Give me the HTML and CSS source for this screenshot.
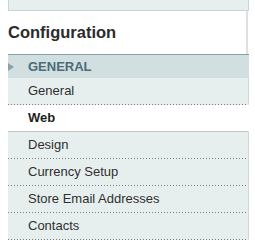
FILE: index.html
```html
<!DOCTYPE html>
<html>
  <head>
    <title>Configuration</title>
    <link rel="stylesheet" href="styles.css">
  </head>
<body>
  <div class="side-col">
    <div class="prev-box"></div>

    <div class="page-title">
      <h3 class="title-t">Configuration</h3>
    </div>

    <div class="section-head">
      <span class="head-arrow"></span>
      <span class="head-t">General</span>
    </div>

    <ul class="tab-list">
      <li class="tab-item">General</li>
      <li class="tab-item active">Web</li>
      <li class="tab-item">Design</li>
      <li class="tab-item">Currency Setup</li>
      <li class="tab-item">Store Email Addresses</li>
      <li class="tab-item">Contacts</li>
    </ul>
  </div>
</body>
</html>
```

FILE: styles.css
```css
body {
  margin: 0;
  background-color: #ffffff;
  font-family: "Liberation Sans", Arial, sans-serif;
  color: #2f2f2f;
}

.side-col {
  margin-left: 8px;
  width: 241px;
}

.prev-box {
  height: 11px;
  background-color: #e7efee;
  border-left: 1px solid #c6d6d6;
  border-right: 1px solid #c6d6d6;
  border-bottom: 1px solid #c6d6d6;
  box-sizing: border-box;
}

.page-title {
  height: 43px;
  box-sizing: border-box;
  border-right: 2px solid #e0e0e0;
  margin-right: 1px;
  padding-top: 12px;
}

.title-t {
  margin: 0;
  font-size: 16.5px;
  line-height: 19px;
  font-weight: bold;
  color: #2b2b2b;
}

.section-head {
  display: flex;
  align-items: center;
  height: 23px;
  background-color: #d1dfe0;
  border-top: 1px solid #85a1a5;
}

.head-arrow {
  width: 0;
  height: 0;
  border-top: 4px solid transparent;
  border-bottom: 4px solid transparent;
  border-left: 6px solid #8ba2aa;
  margin-right: 14px;
}

.head-t {
  font-size: 13px;
  font-weight: bold;
  text-transform: uppercase;
  color: #4b6b7a;
}

.tab-list {
  list-style: none;
  margin: 0;
  padding: 0;
}

.tab-item {
  position: relative;
  height: 26px;
  line-height: 26px;
  padding-left: 20px;
  font-size: 13px;
  background-color: #e7efee;
  border-right: 1px solid #c9d7d7;
  border-bottom: 1px solid transparent;
}

.tab-item::after {
  content: "";
  position: absolute;
  left: 0;
  right: 0;
  bottom: -1px;
  height: 1px;
  background: repeating-linear-gradient(to right, #7c7c7c 0 1px, transparent 1px 3px);
}

.tab-item.active {
  background-color: #ffffff;
  font-weight: bold;
  color: #1f1f1f;
  border-right-color: #ffffff;
  border-bottom: 1px solid #c2c2c2;
}

.tab-item.active::after {
  display: none;
}
```
